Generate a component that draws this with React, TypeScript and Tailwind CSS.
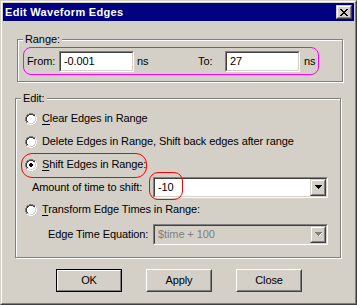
import React from "react";

const COLORS: Record<string, string> = {
  A: "#808080",
  B: "#404040",
  W: "#ffffff",
  L: "#d4d0c8",
  C: "#ffffff",
  X: "#000000",
  G: "#808080",
};

function Pixels({ rows, className, map }: { rows: string[]; className?: string; map?: Record<string, string> }) {
  const m = map ?? COLORS;
  const w = rows[0].length;
  const h = rows.length;
  const rects: React.ReactNode[] = [];
  rows.forEach((r, y) => {
    r.split("").forEach((ch, x) => {
      if (ch !== "." && m[ch]) rects.push(<rect key={`${x}-${y}`} x={x} y={y} width={1} height={1} fill={m[ch]} />);
    });
  });
  return (
    <svg width={w} height={h} viewBox={`0 0 ${w} ${h}`} shapeRendering="crispEdges" className={`shrink-0 block ${className ?? ""}`}>
      {rects}
    </svg>
  );
}

const RADIO = [
  "....AAAA....",
  "..AABBBBAA..",
  ".ABBWWWWBBC.",
  ".ABWWWWWWLC.",
  "ABWWWWWWWWLC",
  "ABWWWWWWWWLC",
  "ABWWWWWWWWLC",
  "ABWWWWWWWWLC",
  ".ABWWWWWWLC.",
  ".ALLWWWWLLC.",
  "..CCLLLLCC..",
  "....CCCC....",
];

const RADIO_ON = [
  "....AAAA....",
  "..AABBBBAA..",
  ".ABBWWWWBBC.",
  ".ABWWWWWWLC.",
  "ABWWWXXWWWLC",
  "ABWWXXXXWWLC",
  "ABWWXXXXWWLC",
  "ABWWWXXWWWLC",
  ".ABWWWWWWLC.",
  ".ALLWWWWLLC.",
  "..CCLLLLCC..",
  "....CCCC....",
];

const CLOSE_X = [
  "XX....XX",
  ".XX..XX.",
  "..XXXX..",
  "...XX...",
  "..XXXX..",
  ".XX..XX.",
  "XX....XX",
];

const ARROW = ["XXXXXXX", ".XXXXX.", "..XXX..", "...X..."];
const ARROW_DIS = ["GGGGGGG.", ".GGGGGW.", "..GGGW..", "...GW...", "........"];

function Radio({ checked }: { checked?: boolean }) {
  return <Pixels rows={checked ? RADIO_ON : RADIO} />;
}

function Sunken({ className, children, disabled }: { className?: string; children?: React.ReactNode; disabled?: boolean }) {
  return (
    <div className={`border border-t-[#808080] border-l-[#808080] border-r-white border-b-white ${className ?? ""}`}>
      <div
        className={`w-full h-full border border-t-[#404040] border-l-[#404040] border-r-[#d4d0c8] border-b-[#d4d0c8] flex items-center ${
          disabled ? "bg-[#d4d0c8]" : "bg-white"
        }`}
      >
        {children}
      </div>
    </div>
  );
}

function SmallButton({ className, children }: { className?: string; children?: React.ReactNode }) {
  return (
    <div className={`border border-t-[#d4d0c8] border-l-[#d4d0c8] border-r-[#404040] border-b-[#404040] bg-[#d4d0c8] ${className ?? ""}`}>
      <div className="w-full h-full border border-t-white border-l-white border-r-[#808080] border-b-[#808080] flex items-center justify-center">
        {children}
      </div>
    </div>
  );
}

function PushButton({ label, isDefault }: { label: string; isDefault?: boolean }) {
  if (isDefault) {
    return (
      <div className="w-[66px] h-[23px] border border-black bg-[#d4d0c8]">
        <div className="w-full h-full border border-t-white border-l-white border-r-[#808080] border-b-[#808080] flex items-center justify-center">
          <span>{label}</span>
        </div>
      </div>
    );
  }
  return (
    <div className="w-[66px] h-[23px] border border-t-white border-l-white border-r-[#404040] border-b-[#404040] bg-[#d4d0c8]">
      <div className="w-full h-full border border-t-[#d4d0c8] border-l-[#d4d0c8] border-r-[#808080] border-b-[#808080] flex items-center justify-center">
        <span>{label}</span>
      </div>
    </div>
  );
}

function GroupBox({ label, className, children }: { label: string; className?: string; children?: React.ReactNode }) {
  return (
    <div className={`relative border border-[#808080] shadow-[1px_1px_0_#fff,inset_1px_1px_0_#fff] ${className ?? ""}`}>
      <span className="absolute -top-[7px] left-[5px] px-[2px] bg-[#d4d0c8] leading-[13px]">{label}</span>
      {children}
    </div>
  );
}

function Combo({ value, disabled }: { value: string; disabled?: boolean }) {
  return (
    <Sunken className="w-[175px] h-[21px]" disabled={disabled}>
      <span className={`flex-1 pl-[3px] ${disabled ? "text-[#808080]" : "text-black"}`}>{value}</span>
      <SmallButton className="w-[16px] h-[17px]">
        {disabled ? <Pixels rows={ARROW_DIS} className="mt-[1px] ml-[1px]" /> : <Pixels rows={ARROW} />}
      </SmallButton>
    </Sunken>
  );
}

export default function App() {
  return (
    <div className="w-[357px] h-[305px] bg-[#d4d0c8] font-['Liberation_Sans',Arial,sans-serif] text-[11px] leading-[13px] tracking-[-0.1px] text-black select-none">
      <div className="w-full h-full border border-t-[#d4d0c8] border-l-[#d4d0c8] border-r-[#404040] border-b-[#404040]">
        <div className="w-full h-full border border-t-white border-l-white border-r-[#808080] border-b-[#808080] p-[1px] flex flex-col">
          {/* Title bar */}
          <div className="h-[18px] bg-[#000080] flex items-center justify-between pl-[2px] pr-[2px] shrink-0">
            <span className="text-white font-bold tracking-[0.3px]">Edit Waveform Edges</span>
            <SmallButton className="w-[16px] h-[14px]">
              <Pixels rows={CLOSE_X} />
            </SmallButton>
          </div>

          {/* Client */}
          <div className="flex flex-col flex-1">
            <GroupBox label="Range:" className="ml-[14px] mt-[18px] w-[326px] h-[43px]">
              <div className="flex items-center pl-[9px] pt-[11px]">
                <span className="w-[32px]">From:</span>
                <Sunken className="w-[75px] h-[21px]">
                  <span className="pl-[3px]">-0.001</span>
                </Sunken>
                <span className="w-[64px] pl-[3px]">ns</span>
                <span className="w-[27px]">To:</span>
                <Sunken className="w-[75px] h-[21px]">
                  <span className="pl-[3px]">27</span>
                </Sunken>
                <span className="pl-[4px]">ns</span>
              </div>
              <div className="absolute left-[5px] top-[7px] w-[296px] h-[28px] border border-[#ff00ff] rounded-[8px] pointer-events-none" />
            </GroupBox>

            <GroupBox label="Edit:" className="ml-[12px] mt-[16px] w-[326px] h-[160px]">
              <div className="flex flex-col pt-[8px]">
                <div className="h-[23px] flex items-center pl-[9px]">
                  <Radio />
                  <span className="ml-[5px]">
                    <span className="underline underline-offset-[2px]">C</span>lear Edges in Range
                  </span>
                </div>
                <div className="h-[23px] flex items-center pl-[9px]">
                  <Radio />
                  <span className="ml-[5px]">Delete Edges in Range, Shift back edges after range</span>
                </div>
                <div className="h-[23px] flex items-center pl-[9px]">
                  <Radio checked />
                  <span className="ml-[5px]">
                    <span className="underline underline-offset-[2px]">S</span>hift Edges in Range:
                  </span>
                </div>
                <div className="h-[22px] flex items-center">
                  <span className="ml-[16px] w-[121px]">Amount of time to shift:</span>
                  <Combo value="-10" />
                </div>
                <div className="h-[23px] flex items-center pl-[9px]">
                  <Radio />
                  <span className="ml-[5px]">
                    <span className="underline underline-offset-[2px]">T</span>ransform Edge Times in Range:
                  </span>
                </div>
                <div className="h-[26px] flex items-center">
                  <span className="ml-[32px] w-[105px]">Edge Time Equation:</span>
                  <Combo value="$time + 100" disabled />
                </div>
              </div>
              <div className="absolute left-[5px] top-[54px] w-[126px] h-[25px] border border-[#ff0000] rounded-[11px] pointer-events-none" />
              <div className="absolute left-[133px] top-[73px] w-[34px] h-[28px] border border-[#ff0000] rounded-[9px] pointer-events-none" />
            </GroupBox>

            <div className="flex gap-[24px] pl-[53px] mt-[11px]">
              <PushButton label="OK" isDefault />
              <PushButton label="Apply" />
              <PushButton label="Close" />
            </div>
          </div>
        </div>
      </div>
    </div>
  );
}
